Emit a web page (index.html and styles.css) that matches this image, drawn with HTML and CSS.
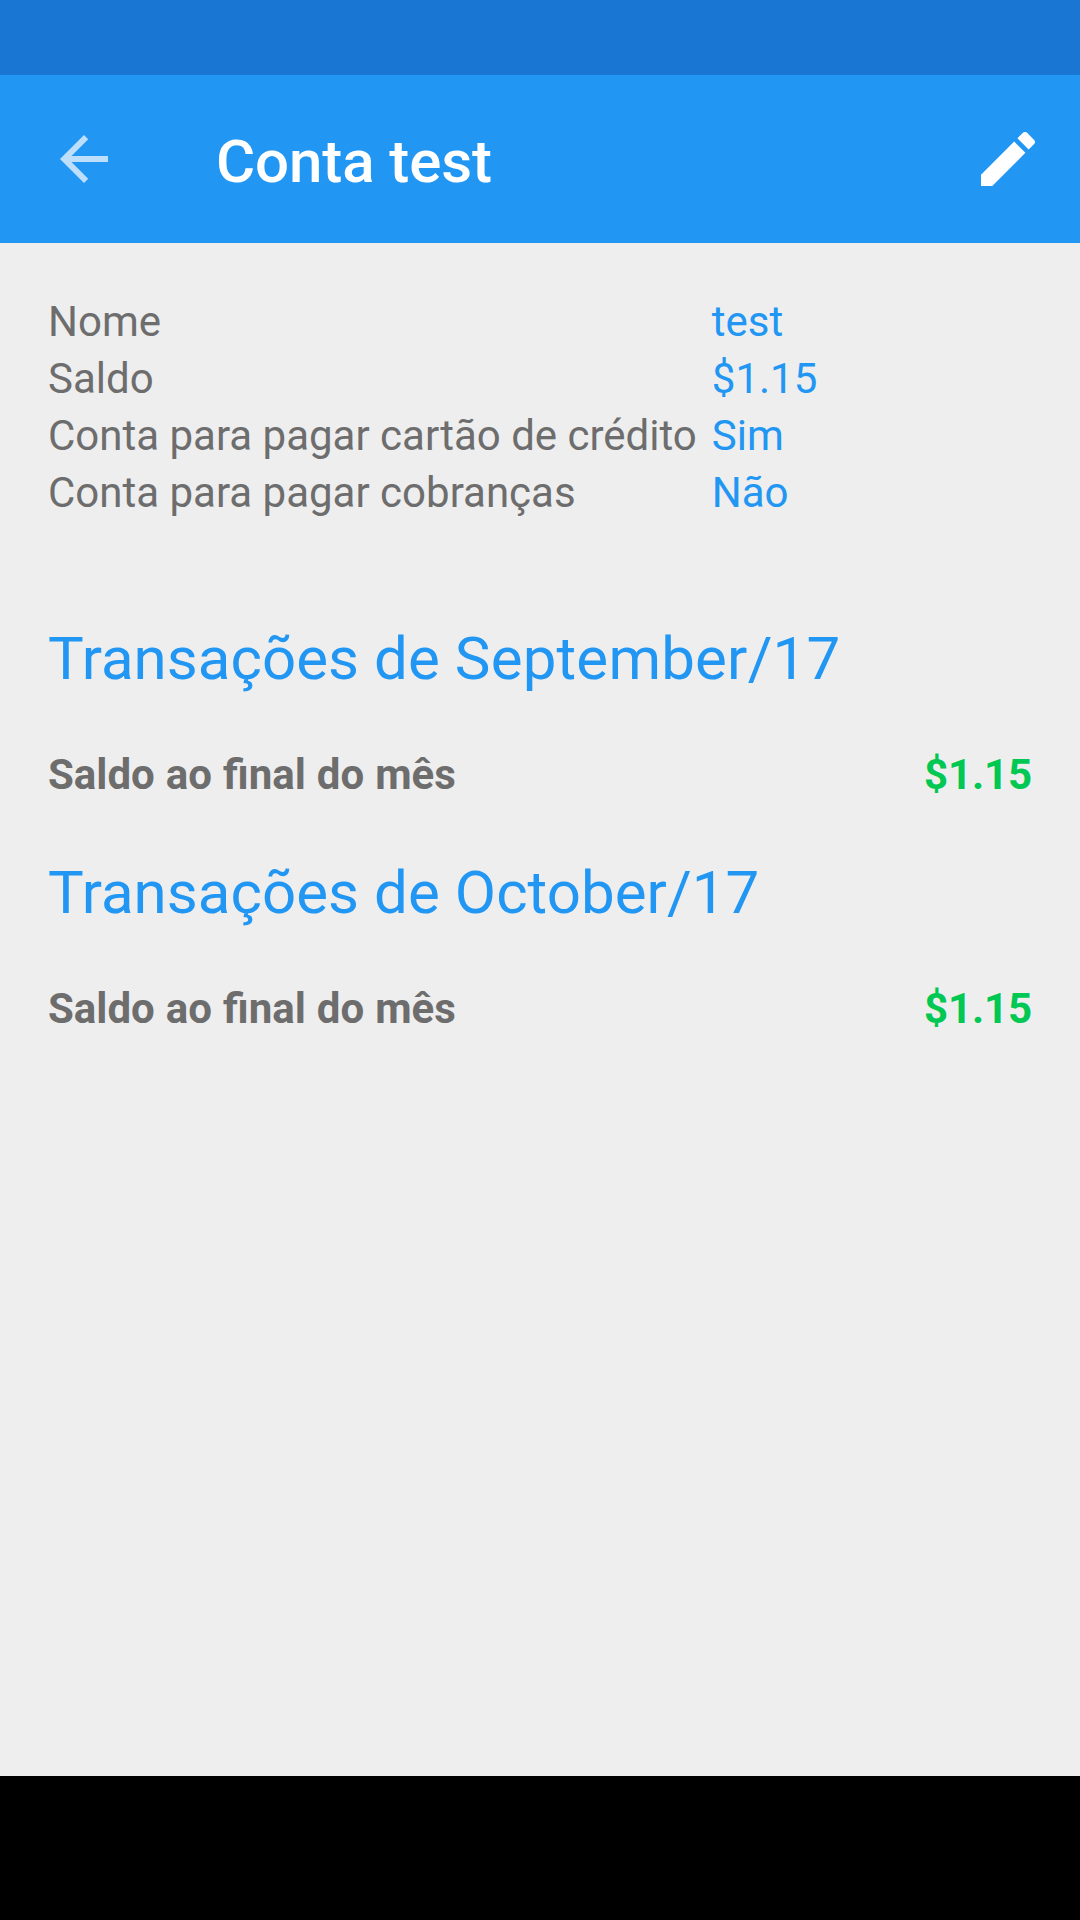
FILE: index.html
```html
<!DOCTYPE html>
<html lang="pt">
<head>
<meta charset="utf-8">
<title>Conta test</title>
<link rel="stylesheet" href="styles.css">
</head>
<body>
<div class="status-bar"></div>
<header class="toolbar">
  <svg class="icon back" viewBox="0 0 24 24"><path d="M20 11H7.83l5.59-5.59L12 4l-8 8 8 8 1.41-1.41L7.83 13H20v-2z"/></svg>
  <h1 class="title">Conta test</h1>
  <svg class="icon edit" viewBox="0 0 24 24"><path d="M3 17.25V21h3.75L17.81 9.94l-3.75-3.75L3 17.25zM20.71 7.04c.39-.39.39-1.02 0-1.41l-2.34-2.34c-.39-.39-1.02-.39-1.41 0l-1.83 1.83 3.75 3.75 1.83-1.83z"/></svg>
</header>
<main class="content">
  <dl class="details">
    <dt>Nome</dt><dd>test</dd>
    <dt>Saldo</dt><dd>$1.15</dd>
    <dt>Conta para pagar cartão de crédito</dt><dd>Sim</dd>
    <dt>Conta para pagar cobranças</dt><dd>Não</dd>
  </dl>
  <section class="month">
    <h2>Transações de <span class="month-name">September/17</span></h2>
    <p class="balance"><span class="label">Saldo ao final do mês</span><span class="amount">$1.15</span></p>
  </section>
  <section class="month">
    <h2>Transações de October/17</h2>
    <p class="balance"><span class="label">Saldo ao final do mês</span><span class="amount">$1.15</span></p>
  </section>
</main>
<footer class="nav-bar"></footer>
</body>
</html>
```
FILE: styles.css
```css
* { box-sizing: border-box; margin: 0; padding: 0; }
body {
  display: flex;
  flex-direction: column;
  height: 1920px;
  background: #eeeeee;
  color: #6d6d6d;
  font-family: Roboto, sans-serif;
  font-size: 42px;
}
.status-bar { height: 75px; background: #1976d2; }
.toolbar {
  display: flex;
  align-items: center;
  height: 168px;
  padding: 0 36px 0 48px;
  background: #2196f3;
}
.icon { width: 72px; height: 72px; fill: #fff; }
.back { opacity: .7; }
.title {
  flex: 1;
  margin-left: 96px;
  padding-top: 5px;
  color: #fff;
  font-size: 60px;
  font-weight: 500;
  line-height: 71px;
  letter-spacing: -.1px;
}
.content { flex: 1; padding: 50px 48px 48px; }
.details {
  display: grid;
  grid-template-columns: max-content 1fr;
  column-gap: 15px;
  grid-auto-rows: 57px;
  line-height: 57px;
}
.details dd { color: #2196f3; }
.month { height: 234px; }
.month h2 {
  color: #2196f3;
  font-size: 60px;
  font-weight: 400;
  line-height: 79px;
  letter-spacing: .06px;
}
.month-name { letter-spacing: .2px; }
.details + .month { margin-top: 98px; }
.balance {
  display: flex;
  justify-content: space-between;
  margin-top: 48px;
  font-weight: 700;
  line-height: 57px;
}
/* Fractional spacing still has to keep the "fi" ligature. */
.label { word-spacing: .6px; }
.amount { color: #00c853; letter-spacing: -.1px; }
.nav-bar { height: 144px; background: #000; }
```
